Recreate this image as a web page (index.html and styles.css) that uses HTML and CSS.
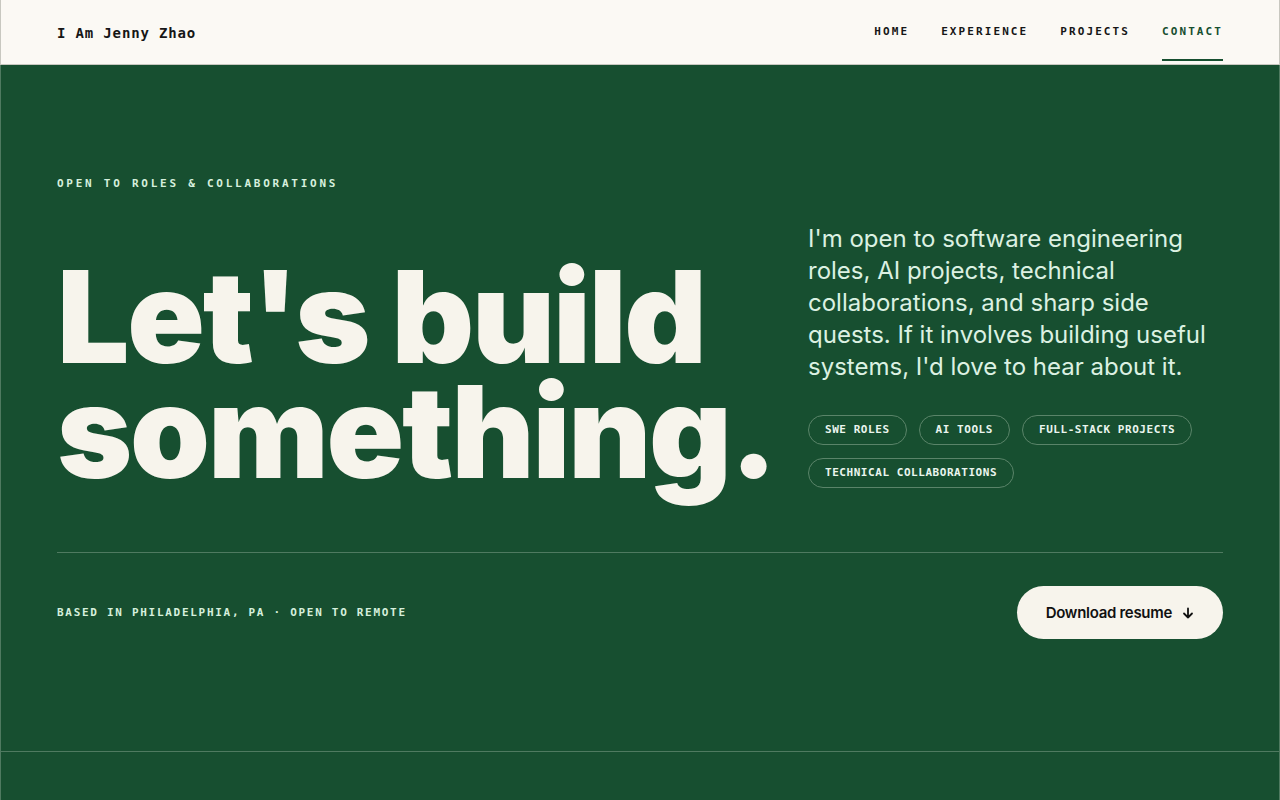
FILE: index.html
```html
<!DOCTYPE html>
<html lang="en">
<head>
<meta charset="utf-8">
<title>I Am Jenny Zhao — Contact</title>
<link rel="stylesheet" href="styles.css">
</head>
<body>
<header class="site-header">
  <div class="header-inner">
    <a class="logo" href="#">I Am Jenny Zhao</a>
    <nav class="nav">
      <a class="nav-link" href="#">HOME</a>
      <a class="nav-link" href="#">EXPERIENCE</a>
      <a class="nav-link" href="#">PROJECTS</a>
      <a class="nav-link active" href="#">CONTACT</a>
    </nav>
  </div>
</header>
<main>
  <section class="contact">
    <div class="contact-inner">
      <p class="eyebrow">OPEN TO ROLES &amp; COLLABORATIONS</p>
      <div class="hero-grid">
        <h1 class="headline">Let's build<br>something.</h1>
        <div class="hero-side">
          <p class="lede">I'm open to software engineering roles, AI projects, technical collaborations, and sharp side quests. If it involves building useful systems, I'd love to hear about it.</p>
          <ul class="tags">
            <li class="tag">SWE ROLES</li>
            <li class="tag">AI TOOLS</li>
            <li class="tag">FULL-STACK PROJECTS</li>
            <li class="tag">TECHNICAL COLLABORATIONS</li>
          </ul>
        </div>
      </div>
      <div class="bottom-row">
        <p class="location">BASED IN PHILADELPHIA, PA · OPEN TO REMOTE</p>
        <a class="resume-btn" href="#">Download resume <span class="arrow">
          <svg width="12" height="12" viewBox="0 0 12 12" fill="none" stroke="currentColor" stroke-width="1.8" stroke-linecap="round" stroke-linejoin="round"><path d="M6 1.5v9M2 6.5l4 4 4-4"/></svg>
        </span></a>
      </div>
    </div>
  </section>
  <section class="next-section"></section>
</main>
</body>
</html>
```

FILE: styles.css
```css
* { box-sizing: border-box; }
html, body { margin: 0; padding: 0; }
body {
  background: #174f30;
  font-family: "Inter", "Noto Sans", sans-serif;
  color: #f7f4ec;
  min-height: 800px;
}
a { text-decoration: none; color: inherit; }

.site-header {
  background: #fbf9f4;
  border-bottom: 1px solid #c8c8c0;
  border-left: 1px solid #c8c8c0;
  border-right: 1px solid #c8c8c0;
  height: 65px;
}
.header-inner {
  height: 64px;
  padding: 0 56px;
  display: flex;
  align-items: flex-start;
  justify-content: space-between;
}
.logo {
  font-family: "DejaVu Sans Mono", monospace;
  font-weight: 700;
  font-size: 14px;
  line-height: 18px;
  letter-spacing: 0.06em;
  color: #161616;
  margin-top: 24px;
}
.nav {
  display: flex;
  gap: 32px;
}
.nav-link {
  font-family: "DejaVu Sans Mono", monospace;
  font-weight: 700;
  font-size: 11px;
  letter-spacing: 0.19em;
  color: #161616;
  display: flex;
  align-items: center;
  padding-top: 3px;
  border-bottom: 2px solid transparent;
  height: 61px;
}
.nav-link.active {
  color: #174f30;
  border-bottom-color: #174f30;
}

.contact {
  border-left: 1px solid #4f7a60;
  border-right: 1px solid #4f7a60;
  border-bottom: 1px solid #4f7a60;
}
.contact-inner {
  padding: 111px 56px 112px;
}
.eyebrow {
  margin: 0 0 31px;
  font-family: "DejaVu Sans Mono", monospace;
  font-weight: 700;
  font-size: 11px;
  line-height: 16px;
  letter-spacing: 0.25em;
  color: #d6efdd;
}
.hero-grid {
  display: grid;
  grid-template-columns: minmax(0, 1fr) 415px;
  column-gap: 40px;
  align-items: end;
  padding-bottom: 63px;
  border-bottom: 1px solid #4f7a60;
}
.headline {
  margin: 0;
  font-family: "Inter", sans-serif;
  font-weight: 900;
  font-size: 128px;
  line-height: 0.9;
  letter-spacing: -0.017em;
  color: #f7f4ec;
  white-space: nowrap;
}
.hero-side { padding-bottom: 1px; }
.lede {
  margin: 0 0 32px;
  font-size: 24px;
  line-height: 32px;
  font-weight: 400;
  color: #dcf1e2;
}
.tags {
  list-style: none;
  margin: 0;
  padding: 0;
  display: flex;
  flex-wrap: wrap;
  gap: 13px 12px;
}
.tag {
  font-family: "DejaVu Sans Mono", monospace;
  font-weight: 700;
  font-size: 11px;
  line-height: 14px;
  letter-spacing: 0.05em;
  color: #eaf5ee;
  padding: 7px 16px;
  border: 1px solid #5a8469;
  border-radius: 999px;
}
.bottom-row {
  display: flex;
  align-items: center;
  justify-content: space-between;
  padding-top: 33px;
}
.location {
  margin: 0;
  font-family: "DejaVu Sans Mono", monospace;
  font-weight: 700;
  font-size: 11px;
  letter-spacing: 0.155em;
  color: #d6efdd;
}
.resume-btn {
  display: inline-flex;
  align-items: center;
  gap: 10px;
  height: 53px;
  padding: 0 29px;
  border-radius: 999px;
  background: #f7f4ec;
  color: #111;
  font-family: "Inter", sans-serif;
  font-weight: 600;
  font-size: 15px;
  letter-spacing: -0.02em;
}
.arrow { display: inline-flex; }

.next-section {
  height: 48px;
  border-left: 1px solid #4f7a60;
  border-right: 1px solid #4f7a60;
}
```
